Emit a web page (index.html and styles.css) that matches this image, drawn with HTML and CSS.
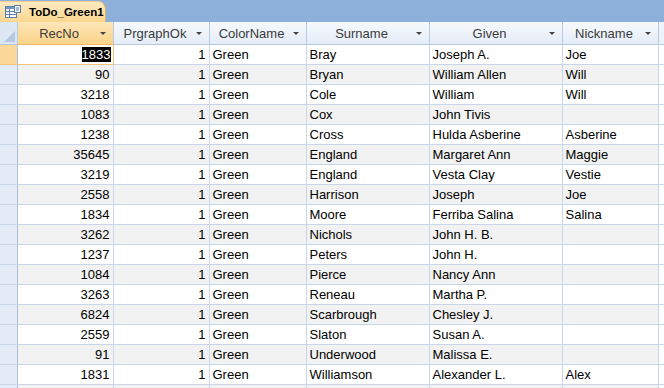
FILE: index.html
```html
<!DOCTYPE html>
<html lang="en">
<head>
    <meta charset="UTF-8">
    <title>ToDo_Green1</title>
    <link rel="stylesheet" href="styles.css">
</head>
<body>

<div class="tabbar">
    <div class="tab">
        <svg class="tab-icon" width="16" height="14" viewBox="0 0 16 14">
            <rect x="0.5" y="1.5" width="11" height="11" fill="#fff" stroke="#5a7fae"/>
            <rect x="1" y="2" width="10" height="2" fill="#6d95c8"/>
            <line x1="1" y1="6.5" x2="11" y2="6.5" stroke="#5a7fae"/>
            <line x1="1" y1="9.5" x2="11" y2="9.5" stroke="#5a7fae"/>
            <line x1="4.5" y1="4" x2="4.5" y2="12" stroke="#5a7fae"/>
            <rect x="9.5" y="0.5" width="6" height="7" fill="#f3f6fb" stroke="#5a7fae"/>
            <line x1="11" y1="3" x2="14" y2="3" stroke="#5a7fae"/>
            <line x1="11" y1="5" x2="14" y2="5" stroke="#5a7fae"/>
        </svg>
        <span>ToDo_Green1</span>
    </div>
</div>

<table class="grid">
    <colgroup>
        <col class="c-sel"><col class="c-rec"><col class="c-ok"><col class="c-color">
        <col class="c-sur"><col class="c-given"><col class="c-nick"><col>
    </colgroup>
    <thead>
        <tr>
            <th class="corner"><span class="corner-tri"></span></th>
            <th class="active">RecNo<i class="arrow"></i></th>
            <th>PrgraphOk<i class="arrow"></i></th>
            <th>ColorName<i class="arrow"></i></th>
            <th>Surname<i class="arrow"></i></th>
            <th>Given<i class="arrow"></i></th>
            <th>Nickname<i class="arrow"></i></th>
            <th class="filler"></th>
        </tr>
    </thead>
    <tbody>
        <tr class="current">
            <td class="sel"></td>
            <td class="num focus"><span class="hl">1833</span></td>
            <td class="num">1</td><td>Green</td><td>Bray</td><td>Joseph A.</td><td>Joe</td><td class="filler"></td>
        </tr>
        <tr><td class="sel"></td><td class="num">90</td><td class="num">1</td><td>Green</td><td>Bryan</td><td>William Allen</td><td>Will</td><td class="filler"></td></tr>
        <tr><td class="sel"></td><td class="num">3218</td><td class="num">1</td><td>Green</td><td>Cole</td><td>William</td><td>Will</td><td class="filler"></td></tr>
        <tr><td class="sel"></td><td class="num">1083</td><td class="num">1</td><td>Green</td><td>Cox</td><td>John Tivis</td><td></td><td class="filler"></td></tr>
        <tr><td class="sel"></td><td class="num">1238</td><td class="num">1</td><td>Green</td><td>Cross</td><td>Hulda Asberine</td><td>Asberine</td><td class="filler"></td></tr>
        <tr><td class="sel"></td><td class="num">35645</td><td class="num">1</td><td>Green</td><td>England</td><td>Margaret Ann</td><td>Maggie</td><td class="filler"></td></tr>
        <tr><td class="sel"></td><td class="num">3219</td><td class="num">1</td><td>Green</td><td>England</td><td>Vesta Clay</td><td>Vestie</td><td class="filler"></td></tr>
        <tr><td class="sel"></td><td class="num">2558</td><td class="num">1</td><td>Green</td><td>Harrison</td><td>Joseph</td><td>Joe</td><td class="filler"></td></tr>
        <tr><td class="sel"></td><td class="num">1834</td><td class="num">1</td><td>Green</td><td>Moore</td><td>Ferriba Salina</td><td>Salina</td><td class="filler"></td></tr>
        <tr><td class="sel"></td><td class="num">3262</td><td class="num">1</td><td>Green</td><td>Nichols</td><td>John H. B.</td><td></td><td class="filler"></td></tr>
        <tr><td class="sel"></td><td class="num">1237</td><td class="num">1</td><td>Green</td><td>Peters</td><td>John H.</td><td></td><td class="filler"></td></tr>
        <tr><td class="sel"></td><td class="num">1084</td><td class="num">1</td><td>Green</td><td>Pierce</td><td>Nancy Ann</td><td></td><td class="filler"></td></tr>
        <tr><td class="sel"></td><td class="num">3263</td><td class="num">1</td><td>Green</td><td>Reneau</td><td>Martha P.</td><td></td><td class="filler"></td></tr>
        <tr><td class="sel"></td><td class="num">6824</td><td class="num">1</td><td>Green</td><td>Scarbrough</td><td>Chesley J.</td><td></td><td class="filler"></td></tr>
        <tr><td class="sel"></td><td class="num">2559</td><td class="num">1</td><td>Green</td><td>Slaton</td><td>Susan A.</td><td></td><td class="filler"></td></tr>
        <tr><td class="sel"></td><td class="num">91</td><td class="num">1</td><td>Green</td><td>Underwood</td><td>Malissa E.</td><td></td><td class="filler"></td></tr>
        <tr><td class="sel"></td><td class="num">1831</td><td class="num">1</td><td>Green</td><td>Williamson</td><td>Alexander L.</td><td>Alex</td><td class="filler"></td></tr>
        <tr><td class="sel"></td><td class="num"></td><td class="num"></td><td></td><td></td><td></td><td></td><td class="filler"></td></tr>
    </tbody>
</table>

</body>
</html>
```

FILE: styles.css
```css
body {
    margin: 0;
    width: 664px;
    height: 388px;
    overflow: hidden;
    background: #fff;
    font-family: 'Liberation Sans', Arial, sans-serif;
    font-size: 13px;
}

.tabbar {
    height: 22px;
    background-color: #8db0da;
    display: flex;
    align-items: flex-end;
}

.tab {
    height: 21px;
    width: 106px;
    box-sizing: border-box;
    display: flex;
    align-items: center;
    gap: 8px;
    padding-left: 5px;
    background: linear-gradient(to bottom, #fdeac2, #fbd68f);
    border-right: 1px solid #e3b25e;
    border-top: 1px solid #f0cf95;
    border-radius: 0 8px 0 0;
    font-weight: bold;
    font-size: 11.5px;
    color: #000;
}

.tab-icon {
    flex: none;
}

.grid {
    border-collapse: collapse;
    table-layout: fixed;
    width: 664px;
}

.c-sel { width: 17px; }
.c-rec { width: 96px; }
.c-ok { width: 96px; }
.c-color { width: 97px; }
.c-sur { width: 123px; }
.c-given { width: 133px; }
.c-nick { width: 96px; }

th {
    height: 22px;
    padding: 0 16px 0 4px;
    position: relative;
    font-weight: normal;
    color: #3b3b3b;
    text-align: center;
    background: linear-gradient(to bottom, #f6f9fd, #e4ecf7);
    border: 1px solid #b7c9e0;
    border-top: none;
    white-space: nowrap;
}

th.active {
    background: linear-gradient(to bottom, #fde6b8, #fbd38a);
    border-bottom-color: #e9b866;
}

th.corner {
    padding: 0;
    background: #dde7f4;
    border-left: none;
}

.corner-tri {
    position: absolute;
    right: 2px;
    bottom: 2px;
    width: 0;
    height: 0;
    border-left: 11px solid transparent;
    border-bottom: 11px solid #b5c8e2;
}

th.filler {
    padding: 0;
    border-right: none;
    background: #eef3fa;
}

.arrow {
    position: absolute;
    right: 7px;
    top: 10px;
    width: 0;
    height: 0;
    border-left: 3px solid transparent;
    border-right: 3px solid transparent;
    border-top: 3px solid #444;
}

td {
    height: 19px;
    padding: 0 3px;
    border: 1px solid #c9d6e8;
    color: #000;
    white-space: nowrap;
    overflow: hidden;
}

tbody tr:nth-child(even) td {
    background-color: #f2f2f2;
}

td.num {
    text-align: right;
}

td.sel {
    padding: 0;
    background-color: #e3ebf7 !important;
    border-left: none;
    border-right-color: #a9bfdc;
}

td.filler {
    background-color: #fff !important;
    border-right: none;
}

tr.current td.sel {
    background-color: #fcd79a !important;
    border-bottom-color: #f1c57c;
}

td.focus {
    padding-right: 2px;
    border: 1px solid #f0c27a;
}

.hl {
    background-color: #000;
    color: #fff;
}
```
